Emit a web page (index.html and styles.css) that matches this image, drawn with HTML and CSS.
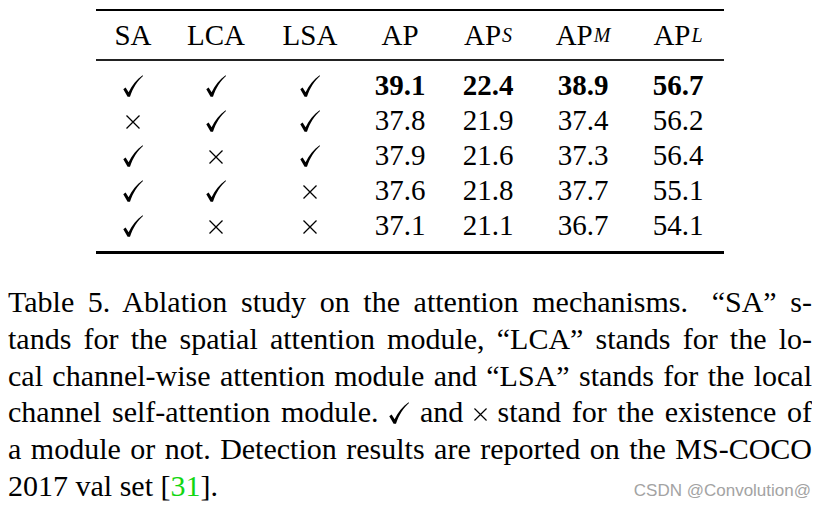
FILE: index.html
```html
<!DOCTYPE html>
<html lang="en">
<head>
<meta charset="utf-8">
<title>Table 5</title>
<link rel="stylesheet" href="styles.css">
</head>
<body>
<div class="page">
  <div class="tbl">
    <div class="row head">
      <div class="cell">SA</div>
      <div class="cell">LCA</div>
      <div class="cell">LSA</div>
      <div class="cell">AP</div>
      <div class="cell">AP<sub class="sb">S</sub></div>
      <div class="cell">AP<sub class="sb">M</sub></div>
      <div class="cell">AP<sub class="sb">L</sub></div>
    </div>
    <div class="tbody">
      <div class="row best">
        <div class="cell"><svg class="ck" viewBox="0 0 20 22"><path d="M0.3 14.2 L2.6 12.6 L5.6 17.2 C9 10.5 13.5 4.6 19.6 0.3 L20 1.1 C14.5 6 10 12.8 7 21.8 L4.6 21.8 Z"/></svg></div>
        <div class="cell"><svg class="ck" viewBox="0 0 20 22"><path d="M0.3 14.2 L2.6 12.6 L5.6 17.2 C9 10.5 13.5 4.6 19.6 0.3 L20 1.1 C14.5 6 10 12.8 7 21.8 L4.6 21.8 Z"/></svg></div>
        <div class="cell"><svg class="ck" viewBox="0 0 20 22"><path d="M0.3 14.2 L2.6 12.6 L5.6 17.2 C9 10.5 13.5 4.6 19.6 0.3 L20 1.1 C14.5 6 10 12.8 7 21.8 L4.6 21.8 Z"/></svg></div>
        <div class="cell">39.1</div>
        <div class="cell">22.4</div>
        <div class="cell">38.9</div>
        <div class="cell">56.7</div>
      </div>
      <div class="row">
        <div class="cell"><svg class="xx" viewBox="0 0 14 14"><path d="M0.5 0.5 L13.5 13.5 M13.5 0.5 L0.5 13.5"/></svg></div>
        <div class="cell"><svg class="ck" viewBox="0 0 20 22"><path d="M0.3 14.2 L2.6 12.6 L5.6 17.2 C9 10.5 13.5 4.6 19.6 0.3 L20 1.1 C14.5 6 10 12.8 7 21.8 L4.6 21.8 Z"/></svg></div>
        <div class="cell"><svg class="ck" viewBox="0 0 20 22"><path d="M0.3 14.2 L2.6 12.6 L5.6 17.2 C9 10.5 13.5 4.6 19.6 0.3 L20 1.1 C14.5 6 10 12.8 7 21.8 L4.6 21.8 Z"/></svg></div>
        <div class="cell">37.8</div>
        <div class="cell">21.9</div>
        <div class="cell">37.4</div>
        <div class="cell">56.2</div>
      </div>
      <div class="row">
        <div class="cell"><svg class="ck" viewBox="0 0 20 22"><path d="M0.3 14.2 L2.6 12.6 L5.6 17.2 C9 10.5 13.5 4.6 19.6 0.3 L20 1.1 C14.5 6 10 12.8 7 21.8 L4.6 21.8 Z"/></svg></div>
        <div class="cell"><svg class="xx" viewBox="0 0 14 14"><path d="M0.5 0.5 L13.5 13.5 M13.5 0.5 L0.5 13.5"/></svg></div>
        <div class="cell"><svg class="ck" viewBox="0 0 20 22"><path d="M0.3 14.2 L2.6 12.6 L5.6 17.2 C9 10.5 13.5 4.6 19.6 0.3 L20 1.1 C14.5 6 10 12.8 7 21.8 L4.6 21.8 Z"/></svg></div>
        <div class="cell">37.9</div>
        <div class="cell">21.6</div>
        <div class="cell">37.3</div>
        <div class="cell">56.4</div>
      </div>
      <div class="row">
        <div class="cell"><svg class="ck" viewBox="0 0 20 22"><path d="M0.3 14.2 L2.6 12.6 L5.6 17.2 C9 10.5 13.5 4.6 19.6 0.3 L20 1.1 C14.5 6 10 12.8 7 21.8 L4.6 21.8 Z"/></svg></div>
        <div class="cell"><svg class="ck" viewBox="0 0 20 22"><path d="M0.3 14.2 L2.6 12.6 L5.6 17.2 C9 10.5 13.5 4.6 19.6 0.3 L20 1.1 C14.5 6 10 12.8 7 21.8 L4.6 21.8 Z"/></svg></div>
        <div class="cell"><svg class="xx" viewBox="0 0 14 14"><path d="M0.5 0.5 L13.5 13.5 M13.5 0.5 L0.5 13.5"/></svg></div>
        <div class="cell">37.6</div>
        <div class="cell">21.8</div>
        <div class="cell">37.7</div>
        <div class="cell">55.1</div>
      </div>
      <div class="row">
        <div class="cell"><svg class="ck" viewBox="0 0 20 22"><path d="M0.3 14.2 L2.6 12.6 L5.6 17.2 C9 10.5 13.5 4.6 19.6 0.3 L20 1.1 C14.5 6 10 12.8 7 21.8 L4.6 21.8 Z"/></svg></div>
        <div class="cell"><svg class="xx" viewBox="0 0 14 14"><path d="M0.5 0.5 L13.5 13.5 M13.5 0.5 L0.5 13.5"/></svg></div>
        <div class="cell"><svg class="xx" viewBox="0 0 14 14"><path d="M0.5 0.5 L13.5 13.5 M13.5 0.5 L0.5 13.5"/></svg></div>
        <div class="cell">37.1</div>
        <div class="cell">21.1</div>
        <div class="cell">36.7</div>
        <div class="cell">54.1</div>
      </div>
    </div>
  </div>

  <div class="caption">
    <div class="ln">Table 5. Ablation study on the attention mechanisms.<span class="sp"></span> “SA” s-</div>
    <div class="ln">tands for the spatial attention module, “LCA” stands for the lo-</div>
    <div class="ln">cal channel-wise attention module and “LSA” stands for the local</div>
    <div class="ln">channel self-attention module. <svg class="ck-i" viewBox="0 0 20 22"><path d="M0.3 14.2 L2.6 12.6 L5.6 17.2 C9 10.5 13.5 4.6 19.6 0.3 L20 1.1 C14.5 6 10 12.8 7 21.8 L4.6 21.8 Z"/></svg> and <svg class="xx-i" viewBox="0 0 14 14"><path d="M0.5 0.5 L13.5 13.5 M13.5 0.5 L0.5 13.5"/></svg> stand for the existence of</div>
    <div class="ln">a module or not. Detection results are reported on the MS-COCO</div>
    <div class="last"><span class="tx">2017 val set [<span class="cite">31</span>].</span><span class="wm">CSDN @Convolution@</span></div>
  </div>
</div>
</body>
</html>
```

FILE: styles.css
```css
body {
  margin: 8px;
  background: #ffffff;
}

.page {
  width: 804px;
  color: #000000;
  font-family: "Liberation Serif", serif;
}

.tbl {
  width: 628px;
  margin: 1px auto 0;
  border-top: 2px solid #000;
  border-bottom: 3px solid #000;
  font-size: 29px;
}

.row {
  display: grid;
  grid-template-columns: 74px 92px 96px 84px 92px 98px 92px;
}

.cell {
  display: flex;
  align-items: center;
  justify-content: center;
  height: 35px;
  line-height: 35px;
  white-space: nowrap;
}

.head {
  border-bottom: 2px solid #222;
}

.head .cell {
  height: 48px;
  line-height: 48px;
}

.sb {
  font-size: 20px;
  font-style: italic;
  line-height: 0;
  vertical-align: -6px;
  margin-left: 1px;
}

.tbody {
  padding: 7px 0 8px;
}

.best .cell {
  font-weight: bold;
}

.ck {
  display: block;
  width: 20px;
  height: 22px;
  fill: #000;
}

.xx {
  display: block;
  width: 14px;
  height: 14px;
  margin-top: 2px;
  stroke: #000;
  stroke-width: 1.3;
  fill: none;
}

.caption {
  margin-top: 30px;
  font-size: 30px;
  line-height: 36.8px;
}

.ln {
  text-align: justify;
  text-align-last: justify;
  white-space: nowrap;
}

.sp {
  display: inline-block;
  width: 10px;
}

.ck-i {
  width: 20px;
  height: 22px;
  vertical-align: -2px;
  fill: #000;
}

.xx-i {
  width: 13px;
  height: 13px;
  vertical-align: 1px;
  stroke: #000;
  stroke-width: 1.3;
  fill: none;
}

.last {
  display: flex;
  justify-content: space-between;
  align-items: baseline;
}

.cite {
  color: #12d612;
}

.wm {
  font-family: "Liberation Sans", sans-serif;
  font-size: 17px;
  color: #a3a3a3;
  margin-right: 1px;
}
```
